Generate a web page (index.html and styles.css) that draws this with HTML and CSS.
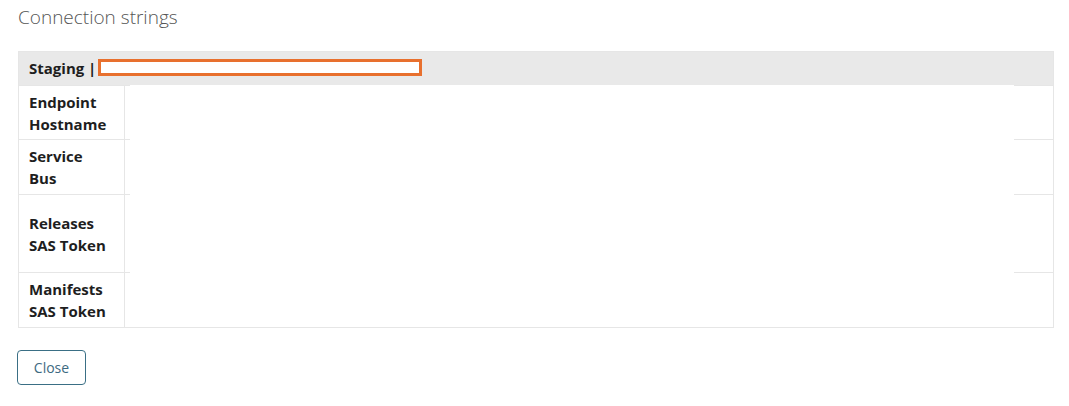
FILE: index.html
```html
<!DOCTYPE html>
<html>
<head>
<meta charset="utf-8">
<link rel="stylesheet" href="styles.css">
</head>
<body>
<div class="page">
  <h2 class="title">Connection strings</h2>
  <div class="table-wrap">
    <table class="conn">
      <thead>
        <tr><th colspan="2" class="env">Staging | <span class="redact-box"></span></th></tr>
      </thead>
      <tbody>
        <tr class="first"><th class="label">Endpoint<br>Hostname</th><td class="value"></td></tr>
        <tr><th class="label">Service<br>Bus</th><td class="value"></td></tr>
        <tr class="tall"><th class="label">Releases<br>SAS Token</th><td class="value"></td></tr>
        <tr><th class="label">Manifests<br>SAS Token</th><td class="value"></td></tr>
      </tbody>
    </table>
    <div class="mask"></div>
  </div>
  <button class="btn">Close</button>
</div>
</body>
</html>
```

FILE: styles.css
```css
html, body {
  margin: 0;
  padding: 0;
  background: #ffffff;
}
.page {
  padding: 0 15px 0 18px;
  font-family: "Open Sans", "Noto Sans", sans-serif;
  color: #1e1e1e;
}
.title {
  margin: 0;
  padding-top: 4px;
  font-size: 19px;
  line-height: 26px;
  font-weight: 300;
  color: #555555;
}
.table-wrap {
  position: relative;
  margin-top: 21px;
}
.conn {
  width: 100%;
  border-collapse: collapse;
  border: 1px solid #e6e6e6;
}
.env {
  background: #e9e9e9;
  text-align: left;
  font-size: 15px;
  font-weight: 700;
  line-height: 22px;
  padding: 5px 10px 6px;
  height: 22px;
  border: 1px solid #e6e6e6;
}
.redact-box {
  display: inline-block;
  vertical-align: -2px;
  width: 318px;
  height: 11px;
  border: 3px solid #e8702e;
  background: #ffffff;
  margin-left: -2px;
}
.label {
  width: 85px;
  text-align: left;
  vertical-align: middle;
  font-size: 15px;
  font-weight: 700;
  line-height: 22px;
  padding: 5px 10px 5px 10px;
  border: 1px solid #e6e6e6;
}
.first .label {
  padding-bottom: 4px;
}
.value {
  border: 1px solid #e6e6e6;
}
.tall .label {
  height: 67px;
}
.mask {
  position: absolute;
  left: 112px;
  right: 40px;
  top: 34px;
  bottom: 1px;
  background: #ffffff;
}
.btn {
  margin-top: 22px;
  margin-left: -1px;
  display: block;
  width: 69px;
  height: 35px;
  padding: 0;
  background: #ffffff;
  border: 1px solid #3a6f85;
  border-radius: 4px;
  font-family: "Open Sans", "Noto Sans", sans-serif;
  font-size: 14px;
  color: #3d6a82;
}
```
